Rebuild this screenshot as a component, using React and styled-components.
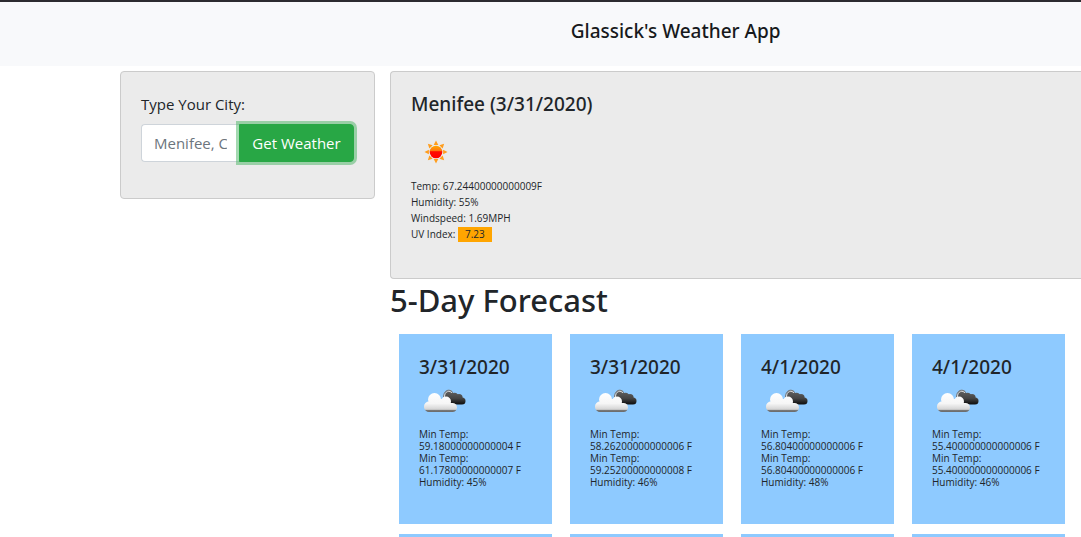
import React from "react";
import styled, { createGlobalStyle } from "styled-components";

const GlobalStyle = createGlobalStyle`
  *, *::before, *::after { box-sizing: border-box; }
  body {
    margin: 0;
    background: #fff;
    color: #212529;
    font-family: "Open Sans", "Noto Sans", sans-serif;
    font-size: 15px;
    line-height: 24px;
  }
  h1, h2, h3, p { margin: 0; font-weight: 500; }
  h1, h2, h3 { font-family: "Noto Sans", "Open Sans", sans-serif; }
`;

const Page = styled.div`
  height: 100vh;
  overflow: hidden;
  border-top: 2px solid #2c2b30;
`;

const Header = styled.header`
  padding: 15px 0 21px 25%;
  background: #f8f9fb;
  text-align: center;
`;

const Title = styled.h1`
  font-size: 19px;
  line-height: 28px;
  color: #17191c;
`;

const Layout = styled.main`
  display: grid;
  grid-template-columns: 255px 1fr;
  align-items: start;
  gap: 15px;
  padding: 5px 0 0 120px;
`;

const Panel = styled.section`
  padding: 20px 20px 36px;
  background: #ebebeb;
  border: 1px solid #cbcbcb;
  border-radius: 4px;
`;

const CurrentPanel = styled(Panel)`
  border-right: 0;
  border-radius: 4px 0 0 4px;
`;

const Label = styled.label`
  display: block;
  margin-bottom: 8px;
`;

const InputGroup = styled.div`
  display: flex;
  height: 38px;
`;

const CityInput = styled.input`
  flex: 1;
  min-width: 0;
  padding: 6px 12px;
  border: 1px solid #ced4da;
  border-right: 0;
  border-radius: 4px 0 0 4px;
  background: #fff;
  font: inherit;
  &::placeholder { color: #6c757d; opacity: 1; }
`;

const SearchButton = styled.button`
  width: 115px;
  padding: 0;
  border: 1px solid #28a745;
  border-radius: 0 4px 4px 0;
  background: #28a745;
  color: #fff;
  font: inherit;
  box-shadow: 0 0 0 3px rgba(72, 180, 97, 0.5);
`;

const CardTitle = styled.h3`
  font-size: 19px;
  line-height: 24px;
`;

const SunIcon = styled.svg`
  display: block;
  width: 50px;
  height: 50px;
  margin: 11px 0 1px;
`;

const CloudIcon = styled.svg`
  display: block;
  width: 50px;
  height: 46px;
  margin-bottom: 3px;
`;

const Reading = styled.p`
  font-size: 10px;
  font-weight: 400;
  line-height: 16px;
`;

const UvBadge = styled.span`
  display: inline-block;
  padding: 0 7px;
  background: orange;
  line-height: 15px;
`;

const SectionTitle = styled.h2`
  padding: 2px 0 15px;
  font-size: 31px;
  line-height: 38px;
`;

const Forecast = styled.div`
  display: grid;
  grid-template-columns: repeat(auto-fill, 153px);
  gap: 10px 18px;
  padding-left: 9px;
`;

const DayCard = styled.article`
  min-height: 190px;
  padding: 21px 20px;
  background: #8ecaff;
`;

const DayReading = styled(Reading)`
  line-height: 12px;
`;

const days = [
  { date: "3/31/2020", min: "59.18000000000004", max: "61.17800000000007", humidity: 45 },
  { date: "3/31/2020", min: "58.26200000000006", max: "59.25200000000008", humidity: 46 },
  { date: "4/1/2020", min: "56.80400000000006", max: "56.80400000000006", humidity: 48 },
  { date: "4/1/2020", min: "55.400000000000006", max: "55.400000000000006", humidity: 46 },
];

function Sun() {
  return (
    <SunIcon viewBox="0 0 50 50" aria-hidden="true">
      <defs>
        <linearGradient id="sun" x1="0" y1="0" x2="0" y2="1">
          <stop offset="0" stopColor="#ffa800" />
          <stop offset=".38" stopColor="#ff7a10" />
          <stop offset=".48" stopColor="#ff0d00" />
          <stop offset="1" stopColor="#ff0000" />
        </linearGradient>
      </defs>
      {[0, 45, 90, 135, 180, 225, 270, 315].map((a) => (
        <path key={a} d="M25 13.5 L27.3 17.9 H22.7 Z" fill="#ff9d1c" transform={`rotate(${a} 25 25)`} />
      ))}
      <circle cx="25" cy="25" r="6.3" fill="url(#sun)" />
    </SunIcon>
  );
}

function Clouds({ id }) {
  const light = `url(#${id}-light)`;
  const dark = `url(#${id}-dark)`;
  return (
    <CloudIcon viewBox="0 2 50 46" aria-hidden="true">
      <defs>
        <linearGradient id={`${id}-light`} gradientUnits="userSpaceOnUse" x1="0" y1="16" x2="0" y2="35">
          <stop offset="0" stopColor="#fff" />
          <stop offset=".55" stopColor="#f6f6f6" />
          <stop offset=".86" stopColor="#d4d4d4" />
          <stop offset=".92" stopColor="#777" />
          <stop offset="1" stopColor="#6a6a6a" />
        </linearGradient>
        <linearGradient id={`${id}-dark`} gradientUnits="userSpaceOnUse" x1="0" y1="13" x2="0" y2="27">
          <stop offset="0" stopColor="#666" />
          <stop offset=".6" stopColor="#444" />
          <stop offset="1" stopColor="#111" />
        </linearGradient>
      </defs>
      <g fill={dark}>
        <circle cx="30" cy="18" r="4.5" />
        <circle cx="35.5" cy="20" r="4.200" />
        <circle cx="40" cy="20.500" r="3.600" />
        <rect x="28" y="20.500" width="18.500" height="7" rx="3.500" />
      </g>
      <path d="M24.500 20 C24.500 12.500 31 11.800 33.500 15" fill="none" stroke="#777" strokeWidth="1" />
      <path d="M25.500 20 C25.500 14 31 13 33 16" fill="none" stroke="#ddd" strokeWidth="1" />
      <g fill={light}>
        <circle cx="15.500" cy="22.500" r="6.500" />
        <circle cx="27" cy="24.500" r="5" />
        <circle cx="10" cy="29.500" r="5" />
        <rect x="5.500" y="26" width="32.500" height="9" rx="4.500" />
        <rect x="12" y="22" width="16" height="8" />
      </g>
    </CloudIcon>
  );
}

export default function App() {
  return (
    <>
      <GlobalStyle />
      <Page>
        <Header>
          <Title>Glassick's Weather App</Title>
        </Header>
        <Layout>
          <Panel>
            <form onSubmit={(e) => e.preventDefault()}>
              <Label htmlFor="city">Type Your City:</Label>
              <InputGroup>
                <CityInput id="city" type="text" placeholder="Menifee, CA" />
                <SearchButton type="submit">Get Weather</SearchButton>
              </InputGroup>
            </form>
          </Panel>
          <div>
            <CurrentPanel>
              <CardTitle>Menifee (3/31/2020)</CardTitle>
              <Sun />
              <Reading>Temp: 67.24400000000009F</Reading>
              <Reading>Humidity: 55%</Reading>
              <Reading>Windspeed: 1.69MPH</Reading>
              <Reading>UV Index: <UvBadge>7.23</UvBadge></Reading>
            </CurrentPanel>
            <SectionTitle>5-Day Forecast</SectionTitle>
            <Forecast>
              {days.map((day, i) => (
                <DayCard key={i}>
                  <CardTitle>{day.date}</CardTitle>
                  <Clouds id={`cloud-${i}`} />
                  <DayReading>Min Temp: {day.min} F</DayReading>
                  <DayReading>Min Temp: {day.max} F</DayReading>
                  <DayReading>Humidity: {day.humidity}%</DayReading>
                </DayCard>
              ))}
              {days.map((_, i) => (
                <DayCard key={`next-${i}`} aria-hidden="true" />
              ))}
            </Forecast>
          </div>
        </Layout>
      </Page>
    </>
  );
}
